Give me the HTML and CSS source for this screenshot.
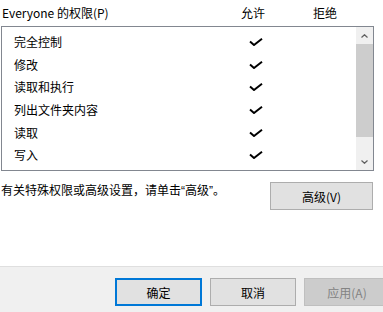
FILE: index.html
```html
<!DOCTYPE html>
<html lang="zh-CN">
<head>
<meta charset="utf-8">
<title>权限</title>
<link rel="stylesheet" href="styles.css">
</head>
<body>
<div class="dialog">
  <div class="main">
    <div class="perm-header">
      <span class="perm-title">Everyone 的权限(P)</span>
      <span class="col col-allow">允许</span>
      <span class="col col-deny">拒绝</span>
    </div>
    <div class="list">
      <div class="rows">
        <div class="row"><span class="name">完全控制</span><span class="check"><svg viewBox="0 0 14 8" width="14" height="8"><path d="M1 3.6 L5 7 L13 0.8" fill="none" stroke="#000" stroke-width="2"/></svg></span></div>
        <div class="row"><span class="name">修改</span><span class="check"><svg viewBox="0 0 14 8" width="14" height="8"><path d="M1 3.6 L5 7 L13 0.8" fill="none" stroke="#000" stroke-width="2"/></svg></span></div>
        <div class="row"><span class="name">读取和执行</span><span class="check"><svg viewBox="0 0 14 8" width="14" height="8"><path d="M1 3.6 L5 7 L13 0.8" fill="none" stroke="#000" stroke-width="2"/></svg></span></div>
        <div class="row"><span class="name">列出文件夹内容</span><span class="check"><svg viewBox="0 0 14 8" width="14" height="8"><path d="M1 3.6 L5 7 L13 0.8" fill="none" stroke="#000" stroke-width="2"/></svg></span></div>
        <div class="row"><span class="name">读取</span><span class="check"><svg viewBox="0 0 14 8" width="14" height="8"><path d="M1 3.6 L5 7 L13 0.8" fill="none" stroke="#000" stroke-width="2"/></svg></span></div>
        <div class="row"><span class="name">写入</span><span class="check"><svg viewBox="0 0 14 8" width="14" height="8"><path d="M1 3.6 L5 7 L13 0.8" fill="none" stroke="#000" stroke-width="2"/></svg></span></div>
      </div>
      <div class="scrollbar">
        <div class="sb-btn"><svg viewBox="0 0 7 4" width="7" height="4"><path d="M0.5 3.5 L3.5 0.7 L6.5 3.5" fill="none" stroke="#606060" stroke-width="1.2"/></svg></div>
        <div class="sb-track"><div class="sb-thumb"></div></div>
        <div class="sb-btn"><svg viewBox="0 0 7 4" width="7" height="4"><path d="M0.5 0.5 L3.5 3.3 L6.5 0.5" fill="none" stroke="#606060" stroke-width="1.2"/></svg></div>
      </div>
    </div>
    <div class="advanced">
      <p class="adv-text">有关特殊权限或高级设置，请单击<span class="q">“</span>高级<span class="q">”</span>。</p>
      <button class="btn btn-adv">高级(V)</button>
    </div>
  </div>
  <div class="footer">
    <button class="btn btn-foot btn-default">确定</button>
    <button class="btn btn-foot">取消</button>
    <button class="btn btn-foot btn-disabled">应用(A)</button>
  </div>
</div>
</body>
</html>
```
FILE: styles.css
```css
html, body {
  margin: 0;
  padding: 0;
  background: #ffffff;
}
body {
  font-family: "Noto Sans CJK SC", "Noto Sans", sans-serif;
  font-size: 12px;
  color: #000;
}
.dialog {
  width: 383px;
  height: 312px;
  overflow: hidden;
  display: flex;
  flex-direction: column;
}
.main {
  height: 267px;
  box-sizing: border-box;
  padding: 0 9px 0 1px;
  border-bottom: 1px solid #dfdfdf;
  display: flex;
  flex-direction: column;
}
.perm-header {
  height: 26px;
  display: flex;
  align-items: center;
  line-height: 26px;
}
.perm-title {
  flex: 1;
  padding-left: 1px;
}
.col {
  width: 60px;
  text-align: center;
}
.col-allow { margin-right: 12px; }
.col-deny { margin-right: 19px; }
.list {
  height: 145px;
  box-sizing: border-box;
  border: 1px solid #828790;
  display: flex;
}
.rows {
  flex: 1;
  padding-top: 4px;
}
.row {
  height: 22.6px;
  display: grid;
  grid-template-columns: 239px 30px;
  align-items: center;
}
.name {
  padding-left: 12px;
  line-height: 16px;
}
.check {
  display: flex;
  justify-content: center;
  align-items: center;
  height: 100%;
}
.check svg { display: block; }
.scrollbar {
  width: 17px;
  background: #f0f0f0;
  display: flex;
  flex-direction: column;
}
.sb-btn {
  height: 17px;
  display: flex;
  align-items: center;
  justify-content: center;
}
.sb-btn svg { display: block; }
.sb-track {
  flex: 1;
}
.sb-thumb {
  height: 93px;
  background: #cdcdcd;
}
.advanced {
  margin-top: 11px;
  display: flex;
  justify-content: space-between;
  align-items: flex-start;
}
.adv-text {
  margin: 0;
  line-height: 15px;
}
.q {
  font-family: "Liberation Sans", sans-serif;
  font-size: 12px;
}
.btn {
  font-family: "Noto Sans CJK SC", "Noto Sans", sans-serif;
  font-size: 12px;
  color: #000;
  background: #e1e1e1;
  border: 1px solid #adadad;
  border-radius: 0;
  padding: 0;
  margin: 0;
  box-sizing: border-box;
}
.btn-adv {
  width: 103px;
  height: 28px;
  margin-right: 1px;
}
.footer {
  flex: 1;
  background: #f0f0f0;
  display: flex;
  align-items: flex-start;
  padding: 11px 0 0 115px;
  gap: 8px;
}
.btn-foot {
  width: 86px;
  height: 28px;
  flex-shrink: 0;
}
.btn-default {
  width: 87px;
  border: 2px solid #0078d7;
}
.btn-disabled {
  background: #cccccc;
  border-color: #bfbfbf;
  color: #838383;
}
```
